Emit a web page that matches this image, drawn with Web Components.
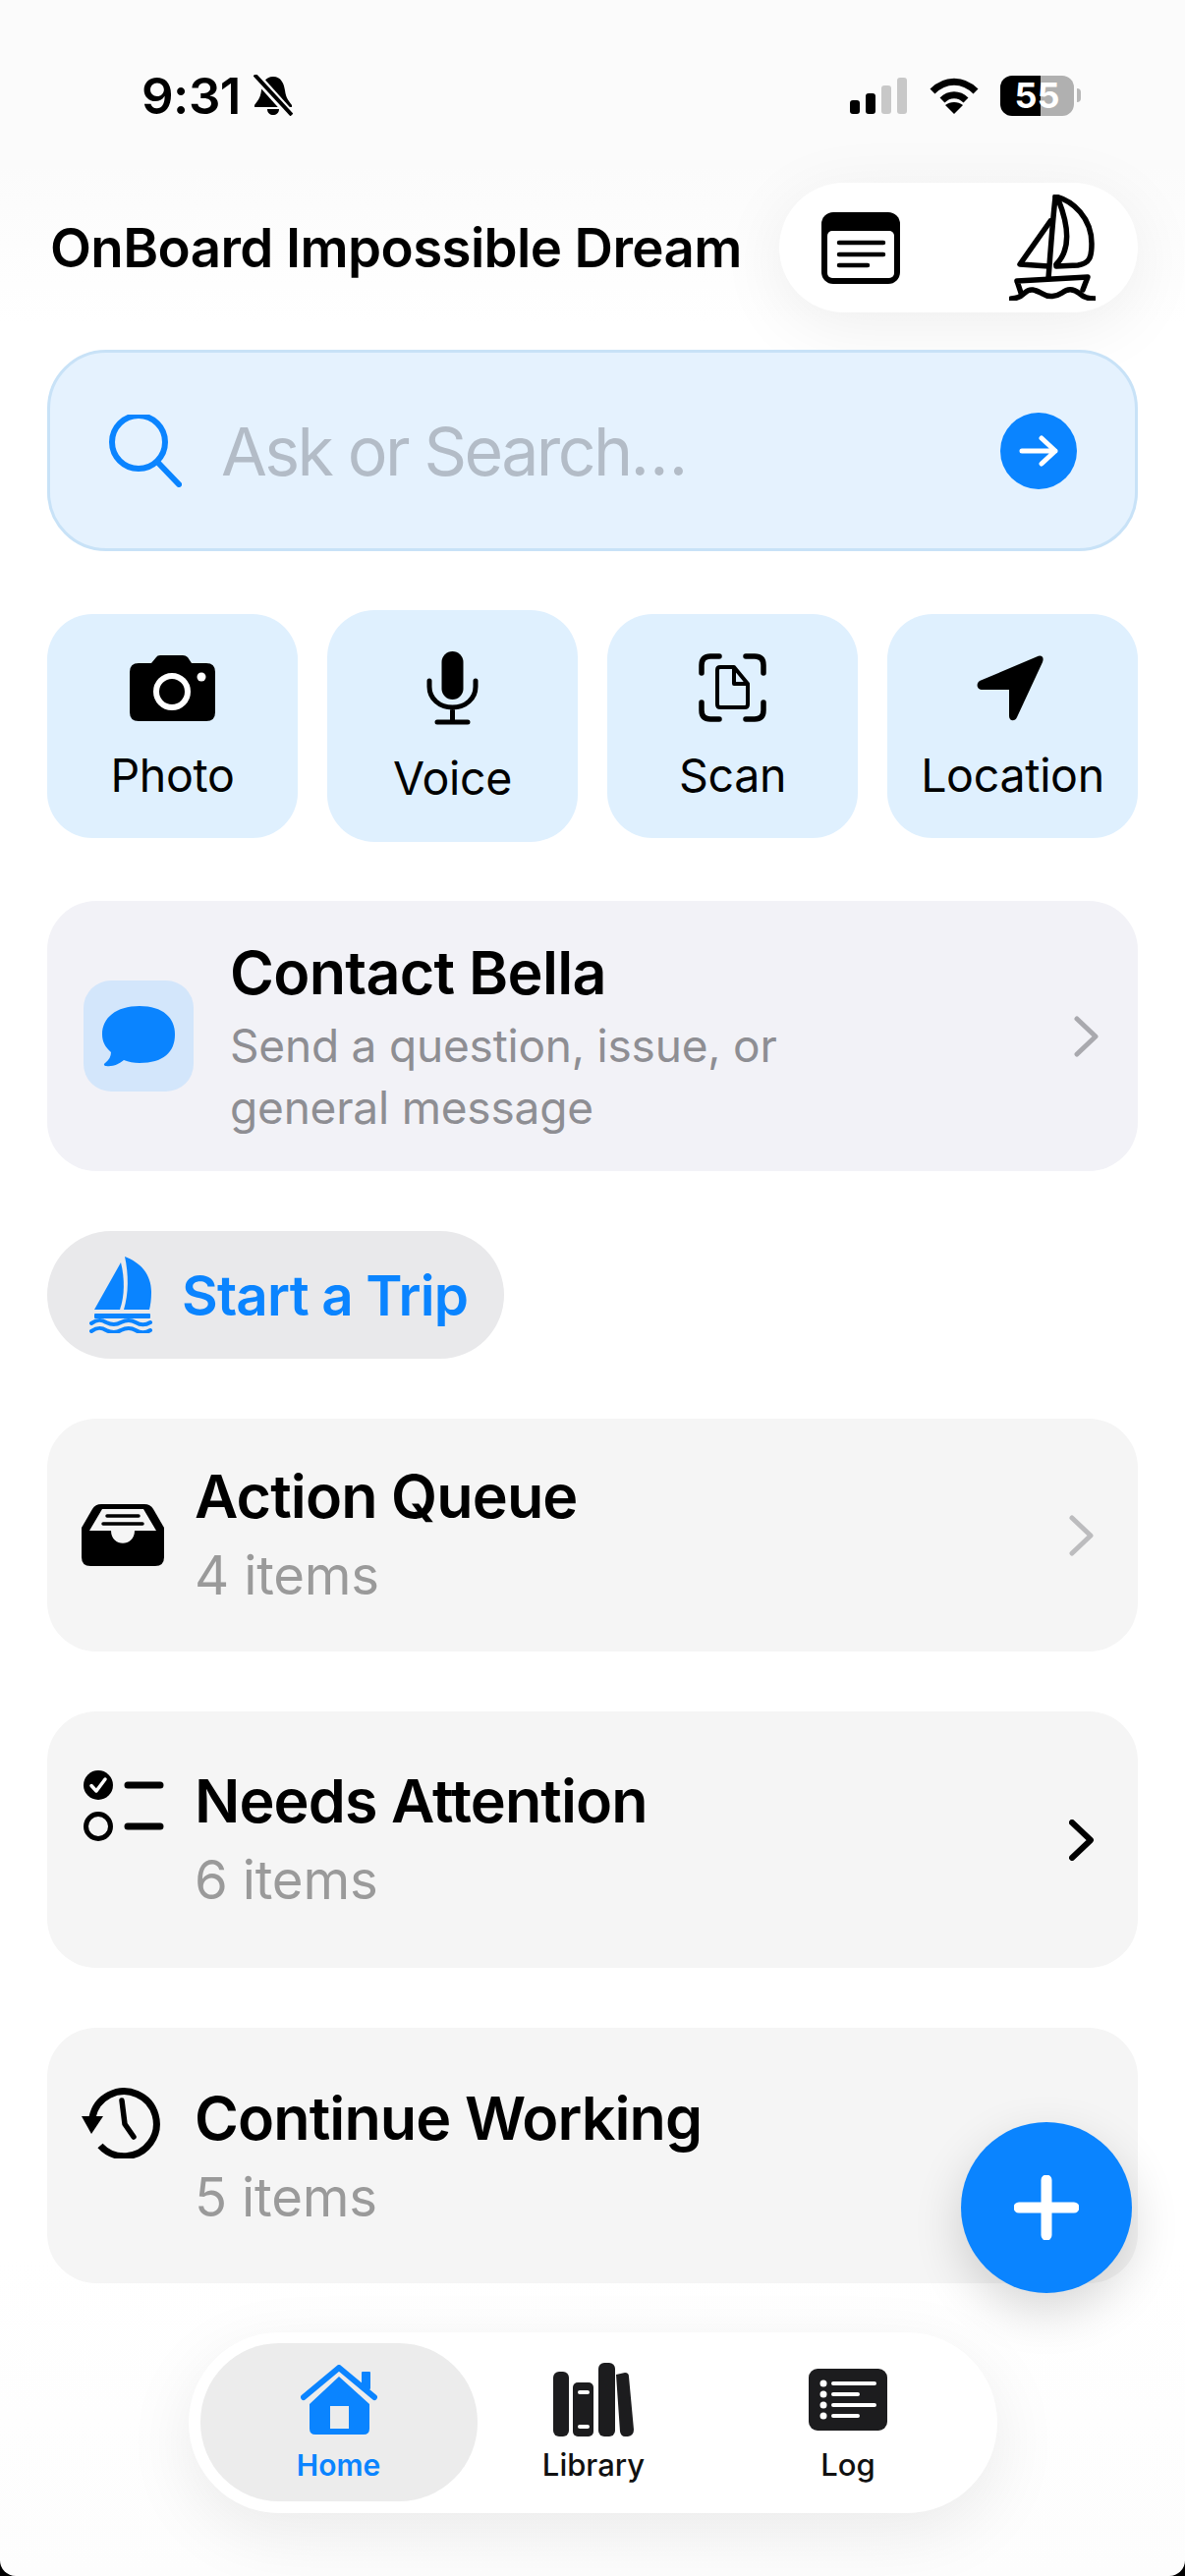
<!DOCTYPE html>
<html>
<head>
<meta charset="utf-8">
<title>OnBoard</title>
<style>
  html { background: #000; }
  body { margin: 0; font-family: Inter, "Liberation Sans", sans-serif; color: #000; }
  #screen {
    position: relative;
    height: 2622px;
    box-sizing: border-box;
    padding: 37px 48px 0;
    display: flex;
    flex-direction: column;
    overflow: hidden;
    border-radius: 0 0 16px 16px;
    background: linear-gradient(#fbfbfb 0, #fbfbfb 170px, #fff 330px, #fff 2300px, #fdfdfd 2622px);
  }
</style>
</head>
<body>
<div id="screen">
  <status-bar time="9:31" level="55"></status-bar>
  <top-header>OnBoard Impossible Dream</top-header>
  <search-box>Ask or Search…</search-box>

  <quick-row>
    <quick-action>
      <svg slot="icon" width="87" height="67" viewBox="0 0 87 67"><path d="M10 8H22L27 2Q28 0 31 0H54Q57 0 59 2L63 8H78Q87 8 87 17V58Q87 67 78 67H9Q0 67 0 58V17Q0 8 9 8Z"/><circle cx="43" cy="37" r="16" fill="none" stroke="#fff" stroke-width="6"/><circle cx="73" cy="22" r="4.5" fill="#fff"/></svg>
      Photo
    </quick-action>
    <quick-action tall>
      <svg slot="icon" width="53" height="75" viewBox="0 0 53 75"><rect x="15.5" width="22" height="49" rx="11"/><path d="M3 30V36C3 48 13 57 26.500 57C40 57 50 48 50 36V30M26.500 57V70M11 72H42" fill="none" stroke="#000" stroke-width="5" stroke-linecap="round"/></svg>
      Voice
    </quick-action>
    <quick-action>
      <svg slot="icon" width="69" height="70" viewBox="0 0 69 70" fill="none" stroke="#000" stroke-linecap="round" stroke-linejoin="round"><path stroke-width="5.500" d="M3 20V12Q3 3 12 3H21M48 3H57Q66 3 66 12V20M3 50V58Q3 67 12 67H21M48 67H57Q66 67 66 58V50"/><path stroke-width="4" d="M22 14H36L50 31V52Q50 55 47 55H22Q19 55 19 52V17Q19 14 22 14ZM36 14V31H50"/></svg>
      Scan
    </quick-action>
    <quick-action>
      <svg slot="icon" style="margin-right:5px" width="68" height="67" viewBox="0 0 68 67"><path d="M61 1.500C66 -1 69 2 67 7L41 63C39 68 33 67 33 62V35H6C0 35 -1 29 3 26Z"/></svg>
      Location
    </quick-action>
  </quick-row>

  <contact-card>
    <svg slot="icon" width="74" height="62" viewBox="0 0 74 62"><path fill="#0a84ff" d="M38 0C62 0 74 12 74 29C74 47 62 58 38 58C32 58 27 57 22 55C17 59 11 62 4 61C2 61 1 59 3 58C7 55 9 51 9 47C3 42 0 36 0 29C0 12 14 0 38 0Z"/></svg>
    <span slot="title">Contact Bella</span>
    Send a question, issue, or general message
  </contact-card>

  <trip-button>
    <svg slot="icon" width="64" height="78" viewBox="0 0 64 78" fill="#0a84ff"><path d="M32 6C36 22 36 40 31 54H5Z"/><path d="M36 0C52 6 63 18 63 36C63 44 62 50 61 54H35C40 38 40 18 36 0Z"/><rect x="5" y="58" width="57" height="5" rx="1"/><path d="M2 68C8 64 12 64 17 67C23 70 27 70 32 67C38 64 42 64 47 67C52 70 57 70 62 67M2 76C8 72 12 72 17 75C23 78 27 78 32 75C38 72 42 72 47 75C52 78 57 78 62 75" fill="none" stroke="#0a84ff" stroke-width="4" stroke-linecap="round"/></svg>
    Start a Trip
  </trip-button>

  <list-card chevron="#bcbcbe" style="--h:237px">
    <svg slot="icon" width="84" height="63" viewBox="0 0 84 63"><path d="M20 0H64Q70 0 73 5L84 24V54Q84 63 75 63H9Q0 63 0 54V24L11 5Q14 0 20 0Z"/><path fill="#f5f5f5" d="M21 5H63L76 27H54C54 44 30 44 30 27H8Z"/><path d="M26 12H58M22 20H62" stroke="#000" stroke-width="3.500" stroke-linecap="round"/></svg>
    <span slot="title">Action Queue</span>
    4 items
  </list-card>

  <list-card chevron="#000" raised style="--h:261px">
    <svg slot="icon" style="margin-left:2px" width="82" height="72" viewBox="0 0 82 72"><circle cx="15" cy="15" r="15"/><path d="M8 15.500L13 21L22 9" fill="none" stroke="#fff" stroke-width="3.500" stroke-linecap="round" stroke-linejoin="round"/><circle cx="15" cy="57" r="12.500" fill="none" stroke="#000" stroke-width="5"/><path d="M45 15H78M45 57H78" stroke="#000" stroke-width="7" stroke-linecap="round"/></svg>
    <span slot="title">Needs Attention</span>
    6 items
  </list-card>

  <list-card raised style="--h:260px;--shift:2px">
    <svg slot="icon" width="80" height="73" viewBox="0 0 80 73" fill="none" stroke="#000"><path stroke-width="7" d="M11 31A33 33 0 1 1 19 60"/><path fill="#000" stroke="none" d="M0 30H22L10 48Z"/><path stroke-width="5.500" stroke-linecap="round" stroke-linejoin="round" d="M41 14L44 38L53 51"/></svg>
    <span slot="title">Continue Working</span>
    5 items
  </list-card>

  <tab-bar>
    <tab-item active>
      <svg slot="icon" width="78" height="72" viewBox="0 0 78 72" fill="#0a84ff"><path d="M39 12L70 40V65Q70 71 64 71H15Q9 71 9 65V40ZM30 42V65H49V42Z" fill-rule="evenodd"/><rect x="62" y="7" width="9" height="18" rx="1"/><path d="M3 33L39 3L75 33" fill="none" stroke="#0a84ff" stroke-width="6" stroke-linecap="round" stroke-linejoin="round"/></svg>
      Home
    </tab-item>
    <tab-item>
      <svg slot="icon" width="83" height="75" viewBox="0 0 83 75" fill="#1c1c1e"><rect y="9" width="16" height="66" rx="6"/><rect x="20" y="20" width="21" height="55" rx="5"/><rect x="25" y="28" width="12" height="4" rx="2" fill="#fff"/><rect x="25" y="63" width="12" height="4" rx="2" fill="#fff"/><rect x="46" width="17" height="75" rx="6"/><path d="M64 12L73 10Q77 10 77 14L82 68Q82 74 76 75H73Q69 75 68 70Z"/></svg>
      Library
    </tab-item>
    <tab-item>
      <svg slot="icon" width="80" height="63" viewBox="0 0 80 63"><rect width="80" height="63" rx="9" fill="#1c1c1e"/><g fill="#fff"><circle cx="15" cy="15" r="3.500"/><circle cx="15" cy="26" r="3.500"/><circle cx="15" cy="37" r="3.500"/><circle cx="15" cy="48" r="3.500"/></g><path d="M25 15H67M25 26H50M25 37H67M25 48H50" stroke="#fff" stroke-width="4" stroke-linecap="round"/></svg>
      Log
    </tab-item>
  </tab-bar>

  <fab-button></fab-button>
</div>

<script>
function shadow(el, html) {
  el.attachShadow({ mode: "open" }).innerHTML = html;
}

const chevron = (color, width = 5) => `<svg width="25" height="42" viewBox="0 0 25 42"><path d="M3 3L22 21L3 39" fill="none" stroke="${color}" stroke-width="${width}" stroke-linecap="round" stroke-linejoin="round"/></svg>`;

class StatusBar extends HTMLElement {
  connectedCallback() {
    if (this.shadowRoot) return;
    shadow(this, `
    <style>
      :host { display: flex; align-items: center; height: 120px; margin-bottom: 29px; padding: 0 58px 0 96px; flex: none; }
      #time { font-size: 51px; font-weight: 600; letter-spacing: -0.5px; margin-right: 13px; }
      #right { margin-left: auto; display: flex; align-items: center; }
      #signal { margin-right: 23px; }
      #wifi { margin-right: 22px; }
      #battery {
        width: 75px; height: 41px; border-radius: 12px;
        background: linear-gradient(90deg, #000 55%, #b0b0b0 55%);
        color: #fff; font-size: 36px; font-weight: 700; line-height: 41px; text-align: center;
      }
      #nub { width: 4px; height: 14px; margin-left: 3px; background: #b8b8b8; border-radius: 0 7px 7px 0; }
    </style>
    <span id="time">${this.getAttribute("time")}</span>
    <svg width="40" height="42" viewBox="0 0 40 42"><path d="M20 2C28 2 31 9 32 16C33 24 36 27 39 31V33H1V31C4 27 7 24 8 16C9 9 12 2 20 2ZM14 35H26C26 39 23 41 20 41C17 41 14 39 14 35Z"/><path d="M2 1L38 41" stroke="#fbfbfb" stroke-width="9"/><path d="M1 0L39 41" stroke="#000" stroke-width="4"/></svg>
    <div id="right">
      <svg id="signal" width="58" height="37" viewBox="0 0 58 37"><rect y="23" width="10" height="14" rx="3"/><rect x="16" y="16" width="10" height="21" rx="3"/><rect x="32" y="8" width="10" height="29" rx="3" fill="#c8c8c8"/><rect x="48" width="10" height="37" rx="3" fill="#c8c8c8"/></svg>
      <svg id="wifi" width="50" height="37" viewBox="0 0 50 37"><path d="M3 14C16 1 34 1 47 14M13 23C20 16 30 16 37 23" fill="none" stroke="#000" stroke-width="7"/><path d="M25 37L16 28C21 24 29 24 34 28Z"/></svg>
      <div id="battery">${this.getAttribute("level")}</div>
      <div id="nub"></div>
    </div>`);
  }
}
customElements.define("status-bar", StatusBar);

class TopHeader extends HTMLElement {
  constructor() {
    super();
    shadow(this, `
    <style>
      :host { display: flex; align-items: center; justify-content: space-between; height: 132px; flex: none; }
      h1 { margin: 0 0 0 3px; font-size: 54.600px; font-weight: 600; letter-spacing: -0.6px; white-space: nowrap; }
      #pill {
        width: 365px; height: 132px; box-sizing: border-box; padding: 0 43px;
        border-radius: 66px; background: #fff; box-shadow: 0 14px 70px rgba(0,0,0,.07);
        display: flex; align-items: center; justify-content: space-between;
      }
    </style>
    <h1><slot></slot></h1>
    <div id="pill">
      <svg width="80" height="73" viewBox="0 0 80 73"><rect width="80" height="73" rx="12"/><rect x="6" y="19" width="68" height="48" rx="5" fill="#fff"/><path d="M18 31H63M18 43H63M18 54H47" stroke="#000" stroke-width="4.500" stroke-linecap="round"/></svg>
      <svg width="88" height="108" viewBox="0 0 88 108" fill="none" stroke="#000" stroke-width="5.500" stroke-linecap="round" stroke-linejoin="round"><path d="M47 3C44 30 42 60 40 85"/><path d="M47 2C65 6 84 24 84 50C84 64 82 70 70 72L48 73"/><path d="M50 5C60 30 64 55 48 71"/><path d="M42 27L11 71L40 73"/><path d="M8 88L80 84L75 97M8 88L12 100"/><path d="M2 106C8 106 12 104 16 100C22 94 28 98 34 101C40 105 48 104 54 100C60 95 66 96 72 101C76 105 80 106 87 106"/></svg>
    </div>`);
  }
}
customElements.define("top-header", TopHeader);

class SearchBox extends HTMLElement {
  constructor() {
    super();
    shadow(this, `
    <style>
      :host {
        display: flex; align-items: center; flex: none; height: 205px; box-sizing: border-box;
        margin-top: 38px; padding: 0 59px;
        background: #e5f2fe; border: 3px solid #c8e2f7; border-radius: 60px;
      }
      #text { flex: 1; margin-left: 40px; font-size: 68px; letter-spacing: -2.600px; color: #b3bcc7; }
      #go { width: 78px; height: 78px; border-radius: 50%; background: #0a84ff; display: flex; align-items: center; justify-content: center; }
    </style>
    <svg width="75" height="74" viewBox="0 0 75 74" fill="none" stroke="#0a84ff" stroke-width="6" stroke-linecap="round"><circle cx="31" cy="28" r="27"/><path d="M50 48L72 71"/></svg>
    <div id="text"><slot></slot></div>
    <div id="go"><svg width="40" height="32" viewBox="0 0 40 32" fill="none" stroke="#fff" stroke-width="5" stroke-linecap="round" stroke-linejoin="round"><path d="M3 16H37M23 3L37 16L23 29"/></svg></div>`);
  }
}
customElements.define("search-box", SearchBox);

class QuickRow extends HTMLElement {
  constructor() {
    super();
    shadow(this, `
    <style>
      :host { display: grid; grid-template-columns: repeat(4, 255px); justify-content: space-between; align-items: center; margin-top: 60px; flex: none; }
    </style>
    <slot></slot>`);
  }
}
customElements.define("quick-row", QuickRow);

class QuickAction extends HTMLElement {
  constructor() {
    super();
    shadow(this, `
    <style>
      :host {
        display: flex; flex-direction: column; align-items: center; height: 228px; box-sizing: border-box;
        padding-top: 37px; background: #dff0fe; border-radius: 46px;
        font-size: 46.500px; letter-spacing: -0.3px;
      }
      :host([tall]) { height: 236px; padding-top: 41px; border-radius: 48px; }
      #icon { height: 76px; display: flex; align-items: center; }
      #label { margin-top: 23px; line-height: 56px; }
      :host([tall]) #label { margin-top: 26px; }
    </style>
    <div id="icon"><slot name="icon"></slot></div>
    <div id="label"><slot></slot></div>`);
  }
}
customElements.define("quick-action", QuickAction);

class ContactCard extends HTMLElement {
  constructor() {
    super();
    shadow(this, `
    <style>
      :host {
        display: flex; align-items: center; height: 275px; box-sizing: border-box; flex: none;
        margin-top: 60px; padding: 0 40px 0 37px; background: #f2f2f7; border-radius: 50px;
      }
      #tile { width: 112px; height: 113px; border-radius: 28px; background: #d3e6fb; display: flex; align-items: center; justify-content: center; flex: none; }
      #body { align-self: flex-start; margin: 37px 0 0 37px; flex: 1; }
      #title { font-size: 61px; font-weight: 600; line-height: 72px; letter-spacing: -0.7px; }
      #sub { margin-top: 7px; max-width: 640px; font-size: 46px; line-height: 63px; color: #8e8e93; letter-spacing: -0.2px; }
    </style>
    <div id="tile"><slot name="icon"></slot></div>
    <div id="body">
      <div id="title"><slot name="title"></slot></div>
      <div id="sub"><slot></slot></div>
    </div>
    ${chevron("#a9a9ae")}`);
  }
}
customElements.define("contact-card", ContactCard);

class TripButton extends HTMLElement {
  constructor() {
    super();
    shadow(this, `
    <style>
      :host {
        display: flex; align-items: center; align-self: flex-start; width: 465px; height: 130px; box-sizing: border-box; flex: none;
        margin-top: 61px; padding-left: 43px; background: #e9e9eb; border-radius: 65px;
        color: #0a84ff; font-size: 56.500px; font-weight: 600; letter-spacing: -0.8px;
      }
      #label { margin-left: 30px; }
    </style>
    <slot name="icon"></slot>
    <div id="label"><slot></slot></div>`);
  }
}
customElements.define("trip-button", TripButton);

class ListCard extends HTMLElement {
  constructor() {
    super();
    const color = this.getAttribute("chevron");
    shadow(this, `
    <style>
      :host {
        display: flex; align-items: center; height: var(--h); box-sizing: border-box; flex: none;
        margin-top: 61px; padding: 0 45px 0 35px; background: #f5f5f5; border-radius: 50px;
      }
      #icon { width: 115px; flex: none; display: flex; }
      :host([raised]) #icon { align-self: flex-start; margin-top: 60px; }
      #body { flex: 1; margin-top: var(--shift, 0); }
      #title { font-size: 61px; font-weight: 600; line-height: 72px; letter-spacing: -0.9px; }
      #sub { margin-top: 9px; font-size: 54.500px; line-height: 70px; color: #9a9a9a; letter-spacing: -0.2px; }
    </style>
    <div id="icon"><slot name="icon"></slot></div>
    <div id="body">
      <div id="title"><slot name="title"></slot></div>
      <div id="sub"><slot></slot></div>
    </div>
    ${color ? chevron(color, color === "#000" ? 6 : 5) : ""}`);
  }
}
customElements.define("list-card", ListCard);

class TabBar extends HTMLElement {
  constructor() {
    super();
    shadow(this, `
    <style>
      :host {
        display: grid; grid-template-columns: 282px 237px 281px; align-self: center; flex: none;
        width: 823px; height: 184px; box-sizing: border-box; margin-top: 50px; padding: 11px 12px;
        background: #fff; border-radius: 92px; box-shadow: 0 20px 70px rgba(0,0,0,.08);
      }
    </style>
    <slot></slot>`);
  }
}
customElements.define("tab-bar", TabBar);

class TabItem extends HTMLElement {
  constructor() {
    super();
    shadow(this, `
    <style>
      :host {
        display: flex; flex-direction: column; align-items: center; height: 161px; box-sizing: border-box;
        padding-top: 20px; border-radius: 80px; color: #111;
        font-size: 31px; font-weight: 500;
      }
      :host([active]) { background: #ececec; color: #0a84ff; font-weight: 600; font-size: 30px; }
      #icon { height: 75px; display: flex; align-items: center; }
      #label { margin-top: 9px; line-height: 40px; }
    </style>
    <div id="icon"><slot name="icon"></slot></div>
    <div id="label"><slot></slot></div>`);
  }
}
customElements.define("tab-item", TabItem);

class FabButton extends HTMLElement {
  constructor() {
    super();
    shadow(this, `
    <style>
      :host {
        position: absolute; right: 54px; bottom: 288px; width: 174px; height: 174px; border-radius: 50%;
        background: #0a84ff; box-shadow: 0 18px 50px rgba(0,0,0,.16);
        display: flex; align-items: center; justify-content: center;
      }
    </style>
    <svg width="66" height="66" viewBox="0 0 66 66"><path d="M33 5V61M5 33H61" stroke="#fff" stroke-width="11" stroke-linecap="round"/></svg>`);
  }
}
customElements.define("fab-button", FabButton);
</script>
</body>
</html>
